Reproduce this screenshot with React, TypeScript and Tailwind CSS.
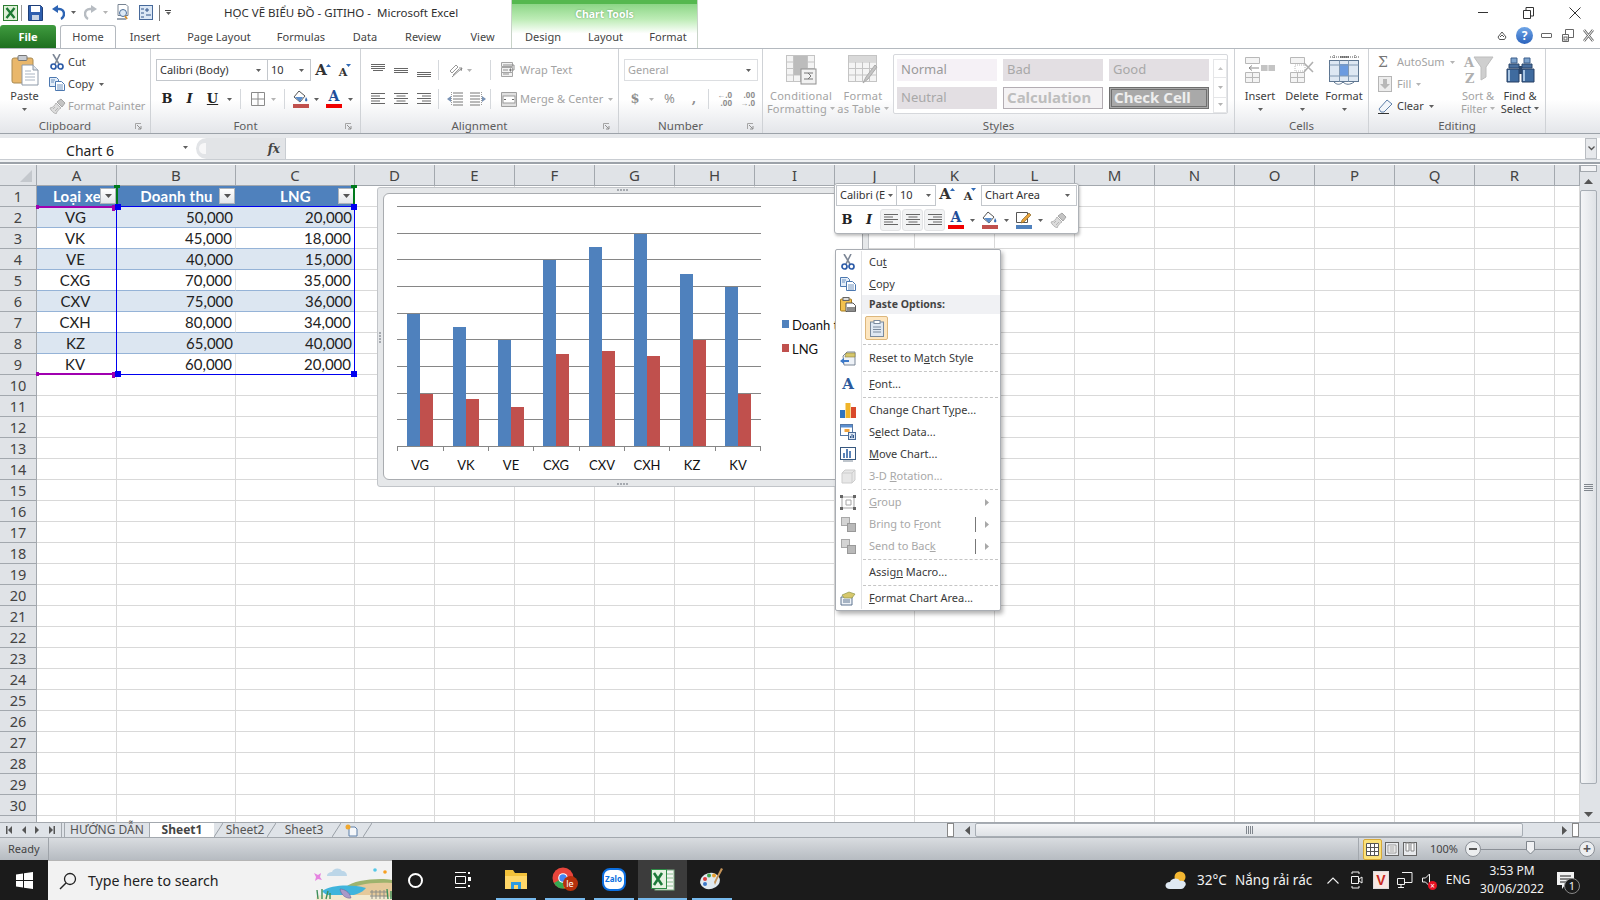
import React from "react";

const UI = "font-['Noto_Sans',sans-serif]";

const Caret = ({ off }: { off?: boolean }) => (
  <svg width="5" height="3" viewBox="0 0 5 3" className="shrink-0">
    <path d="M0 0h5L2.5 3z" fill={off ? "#b4b4b4" : "#5f5f5f"} />
  </svg>
);

const VSep = ({ className = "" }: { className?: string }) => (
  <div className={`h-[20px] w-px shrink-0 bg-[#d5d8dc] ${className}`} />
);

// ---- small drawings for the ribbon ----
const Lines = ({ kind }: { kind: string }) => {
  const sets: Record<string, number[][]> = {
    top: [[0, 1, 14], [0, 3, 14], [0, 5, 14], [2, 7, 10]],
    mid: [[0, 5, 14], [0, 7, 14], [0, 9, 14]],
    bot: [[0, 9, 14], [0, 11, 14], [0, 13, 14]],
    left: [[0, 1, 14], [0, 3.5, 9], [0, 6, 14], [0, 8.5, 9], [0, 11, 14]],
    center: [[0, 1, 14], [2.5, 3.5, 9], [0, 6, 14], [2.5, 8.5, 9], [0, 11, 14]],
    right: [[0, 1, 14], [5, 3.5, 9], [0, 6, 14], [5, 8.5, 9], [0, 11, 14]],
  };
  return (
    <svg width="14" height="14" viewBox="0 0 14 14" className="shrink-0">
      {sets[kind].map(([x, y, w], i) => (
        <rect key={i} x={x} y={y} width={w} height="1" fill="#666" />
      ))}
    </svg>
  );
};

const PasteIcon = () => (
  <svg width="28" height="31" viewBox="0 0 28 31">
    <rect x="1" y="3" width="21" height="25" rx="2" fill="#e9b76b" stroke="#a98a52" />
    <rect x="7" y="0.5" width="9" height="5" rx="1" fill="#c8ccd2" stroke="#777" />
    <path d="M11 10h11l5 5v15H11z" fill="#fff" stroke="#8d99a8" />
    <path d="M22 10v5h5" fill="#dfe5ec" stroke="#8d99a8" />
    <path d="M14 16h6M14 19h10M14 22h10M14 25h10" stroke="#a9b4c2" />
  </svg>
);

const ScissorsIcon = () => (
  <svg width="14" height="16" viewBox="0 0 14 16">
    <path d="M3 0l6 10M10 0L5 10" stroke="#7d8796" strokeWidth="1.6" />
    <circle cx="3.5" cy="12.5" r="2.5" fill="none" stroke="#2d5ca8" strokeWidth="1.7" />
    <circle cx="10.5" cy="12.5" r="2.5" fill="none" stroke="#2d5ca8" strokeWidth="1.7" />
  </svg>
);

const CopyIcon = () => (
  <svg width="16" height="14" viewBox="0 0 16 14">
    <path d="M.5.5h7l2 2v7h-9z" fill="#e3edf8" stroke="#4c78b0" />
    <path d="M6.5 4.5h6l3 3v6h-9z" fill="#fff" stroke="#4c78b0" />
    <path d="M8 8h6M8 10h6M8 12h6M2 3h4M2 5h3" stroke="#4c78b0" strokeWidth=".8" />
  </svg>
);

const BrushIcon = () => (
  <svg width="17" height="16" viewBox="0 0 17 16">
    <path d="M1 10c3 0 5-3 6-5l5 5c-2 1-4 3-5 6-2-1-5-3-6-6z" fill="#dcdcdc" stroke="#b5b5b5" />
    <path d="M8 4l4-3 4 4-3 4z" fill="#c4c4c4" stroke="#a5a5a5" />
    <path d="M4 11l2-2M6 13l3-3" stroke="#b5b5b5" />
  </svg>
);

const GrowA = ({ up }: { up: boolean }) => (
  <span className="flex w-[14px] items-start justify-center">
    <span className={`font-['DejaVu_Serif',serif] font-bold leading-none text-[#333] ${up ? "text-[15px]" : "text-[11px] mt-[4px]"}`}>A</span>
    <svg width="5" height="3" viewBox="0 0 5 3" className="-ml-px mt-px shrink-0">
      <path d={up ? "M0 3h5L2.5 0z" : "M0 0h5L2.5 3z"} fill="#2f69b5" />
    </svg>
  </span>
);

const ColorA = ({ bar }: { bar: string }) => (
  <span className="flex w-[16px] flex-col items-center">
    <span className="font-['DejaVu_Serif',serif] text-[14px] font-bold leading-[13px] text-[#1f4e9a]">A</span>
    <span className={`mt-px h-[4px] w-[16px] ${bar}`} />
  </span>
);

const FillIcon = ({ bar }: { bar: string }) => (
  <span className="flex w-[16px] flex-col items-center">
    <svg width="16" height="13" viewBox="0 0 16 13">
      <path d="M6 1l6 5-5 6-6-5z" fill="#fff" stroke="#555" />
      <path d="M2 7h8l-3 5z" fill="#5b8dcb" />
      <path d="M13 7c1 2 2 3 1 4s-2 0-2-1z" fill="#3a6fb5" />
    </svg>
    <span className={`mt-px h-[4px] w-[16px] ${bar}`} />
  </span>
);

const PenIcon = () => (
  <span className="flex w-[16px] flex-col items-center">
    <svg width="16" height="13" viewBox="0 0 16 13">
      <path d="M.5 1.5h11v10H.5z" fill="#fff" stroke="#555" />
      <path d="M6 9l7-7 2 2-7 7-3 1z" fill="#e8a33d" stroke="#8a6a2d" strokeWidth=".7" />
    </svg>
    <span className="mt-px h-[4px] w-[16px] bg-[#4f81bd]" />
  </span>
);

const BordersIcon = () => (
  <svg width="14" height="14" viewBox="0 0 14 14">
    <path d="M.5.5h13v13H.5zM7 .5v13M.5 7h13" fill="none" stroke="#8a8a8a" />
  </svg>
);

const OrientIcon = () => (
  <svg width="15" height="15" viewBox="0 0 15 15">
    <path d="M1 8l6-6 2 2-6 6zM4 12l6-6" fill="none" stroke="#9a9a9a" />
    <path d="M3 14L13 5M13 5l-1 3M13 5l-3 0" stroke="#8a8a8a" fill="none" />
  </svg>
);

const IndentIcon = ({ flip }: { flip?: boolean }) => (
  <svg width="16" height="14" viewBox="0 0 16 14" className={flip ? "-scale-x-100" : ""}>
    <path d="M6 1h10M6 4h10M6 7h10M6 10h10M6 13h10" stroke="#777" />
    <path d="M0 7l4-3v6z" fill="#7a93b5" />
    <path d="M4.500 0v14" stroke="#9a9a9a" strokeDasharray="1 1" />
  </svg>
);

const WrapIcon = () => (
  <svg width="16" height="16" viewBox="0 0 16 16">
    <path d="M.5 .5h11v4H.5zM.5 5.500h11v5H.5zM.5 10.500h11v4H.5z" fill="#f2f2f2" stroke="#a5a5a5" />
    <path d="M2 3h11v5h-3M2 8h5M2 12h6" stroke="#8f8f8f" fill="none" />
    <path d="M10 6v4l-2-2z" fill="#777" />
  </svg>
);

const MergeIcon = () => (
  <svg width="16" height="15" viewBox="0 0 16 15">
    <path d="M.5.5h15v14H.5z" fill="#e0e0e0" stroke="#a0a0a0" />
    <rect x="2" y="4" width="12" height="7" fill="#fff" stroke="#9a9a9a" />
    <path d="M3 7.500h2M11 7.500h2" stroke="#666" />
  </svg>
);

const TableIcon = ({ cond }: { cond?: boolean }) => (
  <svg width="31" height="30" viewBox="0 0 31 30">
    <rect x=".5" y=".5" width="28" height="26" fill="#f4f4f4" stroke="#c4c4c4" />
    <path d="M.5 7h28M.5 13.500h28M.5 20h28M7.500 .5v26M14.500 .5v26M21.500 .5v26" stroke="#c4c4c4" />
    {cond ? (
      <>
        <rect x="8" y="1" width="13" height="19" fill="#bcbcbc" />
        <rect x="15" y="14" width="15" height="15" fill="#f1f1f1" stroke="#8f8f8f" />
        <path d="M18 18h4l3 3-3 3h-4M22 18h5M22 24h5" stroke="#777" fill="none" />
      </>
    ) : (
      <>
        <rect x="1" y="1" width="27" height="6" fill="#d9d9d9" />
        <path d="M15 28l3-6 9-12 2 2-9 12z" fill="#c4c4c4" stroke="#aaa" />
      </>
    )}
  </svg>
);

const InsertIcon = () => (
  <svg width="31" height="26" viewBox="0 0 31 26">
    <path d="M.5.5h14v6H.5zM.5 15.500h14v10H.5zM7.500 15.500v10M.5 20.500h14" fill="#f4f4f4" stroke="#b8b8b8" />
    <rect x="16" y="8" width="14" height="6" fill="#c4c4c4" />
    <path d="M23 8v6" stroke="#f4f4f4" />
    <path d="M4 11h10M4 11l3-2.500M4 11l3 2.500" stroke="#8a8a8a" fill="none" />
  </svg>
);

const DeleteIcon = () => (
  <svg width="25" height="26" viewBox="0 0 25 26">
    <path d="M.5.5h14v6H.5zM.5 15.500h14v10H.5zM7.500 15.500v10M.5 20.500h14" fill="#f4f4f4" stroke="#b8b8b8" />
    <rect x="5" y="8" width="10" height="6" fill="#fff" stroke="#bbb" strokeDasharray="1 1" />
    <path d="M14 6l9 9M23 5l-9 10" stroke="#b0b0b0" strokeWidth="1.6" />
  </svg>
);

const FormatIcon = () => (
  <svg width="31" height="31" viewBox="0 0 31 31">
    <path d="M1 2h29M5 0v4M26 0v4" stroke="#555" strokeDasharray="1 1" />
    <path d="M11 2h9" stroke="#333" />
    <rect x=".5" y="5.500" width="29" height="21" fill="#dee8f3" stroke="#5e7691" />
    <rect x="11" y="9" width="8" height="12" fill="#6b9be0" />
    <path d="M.5 10h29M.5 21h29M10.500 5.500v21M19.500 5.500v21" stroke="#8098b2" />
    <path d="M5 27c3 3 6 3 9 0 3 3 7 3 11 0" stroke="#5e7691" fill="none" />
  </svg>
);

const SortIcon = () => (
  <svg width="31" height="30" viewBox="0 0 31 30">
    <path d="M11 2h19l-7 10v10l-5 3V12z" fill="#cfcfcf" stroke="#bdbdbd" />
    <text x="1" y="12" fontFamily="'DejaVu Serif',serif" fontWeight="700" fontSize="13" fill="#b0b0b0">A</text>
    <text x="2" y="28" fontFamily="'DejaVu Serif',serif" fontWeight="700" fontSize="13" fill="#b0b0b0">Z</text>
  </svg>
);

const BinocularsIcon = () => (
  <svg width="29" height="26" viewBox="0 0 29 26">
    <path d="M5 1h6v5H5zM18 1h6v5h-6z" fill="#7da3cd" stroke="#3d5f8c" />
    <path d="M3 7h10v4H3zM16 7h10v4H16z" fill="#486f9f" stroke="#2b466b" />
    <path d="M1 12h12v13H1zM16 12h12v13H16z" fill="#3f6b9f" stroke="#263f62" />
    <path d="M3 13v11M18 13v11" stroke="#a7c4e2" strokeWidth="2" />
    <rect x="13" y="9" width="3" height="8" fill="#2b466b" />
  </svg>
);

const FillDown = () => (
  <svg width="14" height="16" viewBox="0 0 14 16">
    <rect x=".5" y=".5" width="13" height="15" fill="#ededed" stroke="#b5b5b5" />
    <path d="M5 3h4v5h3l-5 5-5-5h3z" fill="#b8b8b8" />
  </svg>
);

const EraserIcon = () => (
  <svg width="15" height="15" viewBox="0 0 15 15">
    <path d="M1 10L9 1l5 4-8 8H3z" fill="#f3f6fa" stroke="#5d7ea8" />
    <path d="M0 14.500h11" stroke="#333" />
  </svg>
);

const Launcher = () => (
  <svg width="7" height="7" viewBox="0 0 7 7" className="absolute right-[8px] top-[4px]">
    <path d="M.5 6V.5H6" stroke="#a5a5a5" fill="none" />
    <path d="M2 2l4 4M6 3v3H3" stroke="#8f8f8f" fill="none" />
  </svg>
);

const Group = ({ w, label, launcher, children }: { w: string; label: string; launcher?: boolean; children: React.ReactNode }) => (
  <div className={`flex h-full shrink-0 flex-col border-r border-[#cfd2d6] ${w}`}>
    <div className="h-[70px]">{children}</div>
    <div className={`relative h-[14px] text-center text-[11.5px] leading-[14px] text-[#5c5c5c] ${launcher ? "pr-[20px]" : ""}`}>
      {label}
      {launcher && <Launcher />}
    </div>
  </div>
);

const BigButton = ({ w, icon, lines, caret, off }: { w: string; icon: React.ReactNode; lines: string[]; caret?: boolean; off?: boolean }) => (
  <div className={`flex shrink-0 flex-col items-center pt-[6px] ${w} ${off ? "text-[#a3a3a3]" : "text-[#3d3d3d]"}`}>
    <div className="flex h-[30px] items-center">{icon}</div>
    <div className="mt-[4px] h-[13px] whitespace-nowrap text-[11px] leading-[13px]">{lines[0]}</div>
    {lines[1] ? (
      <div className="flex h-[13px] items-center gap-[3px] whitespace-nowrap text-[11px] leading-[13px]">
        {lines[1]}
        {caret && <Caret off={off} />}
      </div>
    ) : (
      <div className="mt-[1px] flex h-[13px] items-center">{caret && <Caret off={off} />}</div>
    )}
  </div>
);

const SmallRow = ({ icon, iconW, text, off, caret }: { icon: React.ReactNode; iconW: string; text: string; off?: boolean; caret?: boolean }) => (
  <div className={`flex h-[22px] items-center whitespace-nowrap text-[11px] ${off ? "text-[#a3a3a3]" : "text-[#3d3d3d]"}`}>
    <div className={`flex shrink-0 items-center ${iconW}`}>{icon}</div>
    {text}
    {caret && (
      <span className="ml-[5px] flex">
        <Caret off={off} />
      </span>
    )}
  </div>
);

const Box = ({ w, text, gray, caretPad = "pr-[6px]" }: { w: string; text: string; gray?: boolean; caretPad?: string }) => (
  <div className={`flex h-[22px] shrink-0 items-center justify-between border border-[#c3c7cc] pl-[3px] text-[11px] ${caretPad} ${w} ${gray ? "text-[#a3a3a3]" : "text-[#333]"}`}>
    <span className="overflow-hidden whitespace-nowrap">{text}</span>
    <Caret />
  </div>
);

const Ribbon = () => (
  <div className="flex h-[86px] border-b border-t border-b-[#9ca2a9] border-t-[#b4b9bf] bg-gradient-to-b from-white from-60% to-[#e4e6ea]">
    <Group w="w-[151px]" label="Clipboard" launcher>
      <div className="flex">
        <BigButton w="w-[49px]" icon={<PasteIcon />} lines={["Paste"]} caret />
        <div className="pt-[2px]">
          <SmallRow iconW="w-[19px] pl-[1px]" icon={<ScissorsIcon />} text="Cut" />
          <SmallRow iconW="w-[19px]" icon={<CopyIcon />} text="Copy" caret />
          <SmallRow iconW="w-[19px]" icon={<BrushIcon />} text="Format Painter" off />
        </div>
      </div>
    </Group>

    <Group w="w-[210px]" label="Font" launcher>
      <div className="pl-[5px] pt-[10px]">
        <div className="flex items-center">
          <Box w="w-[112px]" text="Calibri (Body)" />
          <Box w="w-[43px] border-l-0" text="10" />
          <div className="ml-[5px] flex gap-[8px]">
            <GrowA up />
            <GrowA up={false} />
          </div>
        </div>
        <div className="mt-[7px] flex h-[22px] items-center text-[#222]">
          <span className="w-[22px] text-center font-['DejaVu_Serif',serif] text-[13px] font-bold">B</span>
          <span className="w-[23px] text-center font-['DejaVu_Serif',serif] text-[13px] font-bold italic">I</span>
          <span className="w-[23px] text-center font-['DejaVu_Serif',serif] text-[13px] font-bold underline">U</span>
          <span className="flex w-[11px] justify-center"><Caret /></span>
          <span className="flex w-[11px] justify-center"><VSep /></span>
          <span className="flex w-[23px] justify-center"><BordersIcon /></span>
          <span className="flex w-[8px] justify-center"><Caret off /></span>
          <span className="flex w-[14px] justify-center"><VSep /></span>
          <span className="flex w-[20px] justify-center"><FillIcon bar="bg-[#c0504d]" /></span>
          <span className="flex w-[10px] justify-center"><Caret /></span>
          <span className="flex w-[26px] justify-center"><ColorA bar="bg-[#f00000]" /></span>
          <span className="flex w-[6px] justify-center"><Caret /></span>
        </div>
      </div>
    </Group>

    <Group w="w-[258px]" label="Alignment" launcher>
      <div className="pl-[5px] pt-[10px]">
        <div className="flex h-[22px] items-center">
          <span className="flex w-[23px] justify-center"><Lines kind="top" /></span>
          <span className="flex w-[23px] justify-center"><Lines kind="mid" /></span>
          <span className="flex w-[23px] justify-center"><Lines kind="bot" /></span>
          <VSep className="ml-[3px]" />
          <span className="ml-[10px] flex w-[15px] justify-center"><OrientIcon /></span>
          <span className="ml-[3px]"><Caret off /></span>
          <VSep className="ml-[18px]" />
          <span className="ml-[10px]"><WrapIcon /></span>
          <span className="ml-[3px] whitespace-nowrap text-[11px] tracking-[0.1px] text-[#a3a3a3]">Wrap Text</span>
        </div>
        <div className="mt-[7px] flex h-[22px] items-center">
          <span className="flex w-[23px] justify-center"><Lines kind="left" /></span>
          <span className="flex w-[23px] justify-center"><Lines kind="center" /></span>
          <span className="flex w-[23px] justify-center"><Lines kind="right" /></span>
          <VSep className="ml-[3px]" />
          <span className="ml-[8px]"><IndentIcon /></span>
          <span className="ml-[7px]"><IndentIcon flip /></span>
          <VSep className="ml-[4px]" />
          <span className="ml-[10px]"><MergeIcon /></span>
          <span className="ml-[3px] whitespace-nowrap text-[11px] tracking-[0.1px] text-[#a3a3a3]">Merge &amp; Center</span>
          <span className="ml-[5px]"><Caret off /></span>
        </div>
      </div>
    </Group>

    <Group w="w-[144px]" label="Number" launcher>
      <div className="pt-[10px]">
        <div className="pl-[5px]">
          <Box w="w-[134px] border-[#dcdee1]" text="General" gray />
        </div>
        <div className="mt-[7px] flex h-[22px] items-center pl-[10px] text-[#8f8f8f]">
          <span className="w-[12px] text-center font-['DejaVu_Serif',serif] text-[13px] font-bold">$</span>
          <span className="ml-[8px]"><Caret off /></span>
          <span className="ml-[8px] w-[15px] text-center text-[13px]">%</span>
          <span className="ml-[12px] w-[10px] text-center font-['DejaVu_Serif',serif] text-[13px] font-bold">,</span>
          <VSep className="ml-[9px]" />
          <span className="ml-[8px] flex w-[15px] flex-col text-right text-[8px] font-bold leading-[8px]">
            <span>←.0</span>
            <span>.00</span>
          </span>
          <span className="ml-[8px] flex w-[15px] flex-col text-right text-[8px] font-bold leading-[8px]">
            <span>.00</span>
            <span>→.0</span>
          </span>
        </div>
      </div>
    </Group>

    <Group w="w-[472px]" label="Styles">
      <div className="flex">
        <BigButton w="ml-[8px] w-[60px] tracking-[0.25px]" icon={<TableIcon cond />} lines={["Conditional", "Formatting"]} caret off />
        <BigButton w="ml-[2px] w-[60px] tracking-[0.25px]" icon={<TableIcon />} lines={["Format", "as Table"]} caret off />
        <div className="mt-[5px] flex h-[60px] w-[335px] rounded-[2px] border border-[#d6d8dc] bg-white pl-[3px] pt-[4px]">
          <div className="grid h-[50px] grid-cols-[100px_100px_100px] grid-rows-[22px_22px] gap-x-[6px] gap-y-[6px] text-[13px] leading-[20px]">
            <div className="bg-[#f5f1f6] pl-[4px] text-[#9a9a9a]">Normal</div>
            <div className="bg-[#e3dfe3] pl-[4px] text-[#a8a8a8]">Bad</div>
            <div className="bg-[#e3dfe3] pl-[4px] text-[#a8a8a8]">Good</div>
            <div className="bg-[#e3dfe3] pl-[4px] text-[#a8a8a8]">Neutral</div>
            <div className="border border-[#b3adb3] bg-[#f4f2f4] pl-[3px] text-[15px] font-bold leading-[18px] text-[#bdbdbd]">Calculation</div>
            <div className="border-[3px] border-double border-[#6f6f6f] bg-[#a9a9a9] pl-[2px] text-[15px] font-bold leading-[15px] text-[#eee]">Check Cell</div>
          </div>
          <div className="ml-[4px] flex w-[14px] flex-col text-[#c4c4c4]">
            <span className="flex h-[20px] items-center justify-center border border-[#e5e6e8]"><svg width="5" height="3" viewBox="0 0 5 3"><path d="M0 3h5L2.500 0z" fill="#c4c4c4" /></svg></span>
            <span className="flex h-[20px] items-center justify-center border-x border-[#e5e6e8]"><Caret off /></span>
            <span className="flex h-[17px] items-center justify-center border border-[#e5e6e8]"><Caret off /></span>
          </div>
        </div>
      </div>
    </Group>

    <Group w="w-[134px]" label="Cells">
      <div className="flex pl-[4px]">
        <BigButton w="w-[42px]" icon={<InsertIcon />} lines={["Insert"]} caret />
        <BigButton w="w-[42px]" icon={<DeleteIcon />} lines={["Delete"]} caret />
        <BigButton w="w-[42px]" icon={<FormatIcon />} lines={["Format"]} caret />
      </div>
    </Group>

    <Group w="w-[177px]" label="Editing">
      <div className="flex">
        <div className="w-[88px] pl-[9px] pt-[2px]">
          <SmallRow iconW="w-[19px]" icon={<span className="font-['DejaVu_Serif',serif] text-[14px] leading-none text-[#777]">Σ</span>} text="AutoSum" off caret />
          <SmallRow iconW="w-[19px]" icon={<FillDown />} text="Fill" off caret />
          <SmallRow iconW="w-[19px]" icon={<EraserIcon />} text="Clear" caret />
        </div>
        <BigButton w="w-[42px]" icon={<SortIcon />} lines={["Sort &", "Filter"]} caret off />
        <BigButton w="w-[42px]" icon={<BinocularsIcon />} lines={["Find &", "Select"]} caret />
      </div>
    </Group>
    <div className="flex-1" />
  </div>
);

// ---- title bar bits ----
const XlLogo = () => (
  <svg width="15" height="16" viewBox="0 0 15 16">
    <rect x=".5" y=".5" width="14" height="15" fill="#fff" stroke="#2e7d32" />
    <rect x="1" y="1" width="13" height="14" fill="#dff0d8" />
    <path d="M3.500 3l8 10M11.500 3l-8 10" stroke="#1e7b34" strokeWidth="2.400" />
  </svg>
);

const SaveIcon = () => (
  <svg width="15" height="16" viewBox="0 0 15 16">
    <path d="M.5.5h12l2 2v13H.5z" fill="#2f5fae" stroke="#1f3f78" />
    <rect x="3" y="1" width="9" height="6" fill="#fff" />
    <rect x="4" y="10" width="7" height="5" fill="#c8d4e4" />
  </svg>
);

const UndoArrow = ({ off }: { off?: boolean }) => (
  <svg width="13" height="15" viewBox="0 0 13 15" className={off ? "-scale-x-100" : ""}>
    <path d="M4 4h3c3 0 5 2 5 5 0 2-1 4-3 5" fill="none" stroke={off ? "#b7bcc2" : "#2d64b4"} strokeWidth="2.400" />
    <path d="M6 0v8L0 4z" fill={off ? "#b7bcc2" : "#2d64b4"} />
  </svg>
);

const PreviewIcon = () => (
  <svg width="15" height="17" viewBox="0 0 15 17">
    <path d="M2 .5h8l2 2v9H2z" fill="#fff" stroke="#788493" />
    <circle cx="7" cy="9" r="3.500" fill="#dce9f6" stroke="#4d6f99" />
    <path d="M9 12l2 3" stroke="#d8912e" strokeWidth="2" />
    <path d="M1 15h9" stroke="#9ba5b1" strokeWidth="2" />
  </svg>
);

const FormIcon = () => (
  <svg width="14" height="15" viewBox="0 0 14 15">
    <rect x=".5" y=".5" width="13" height="14" fill="#dbe7f5" stroke="#47699a" />
    <path d="M2 4h3M2 8h3M2 12h3M8 3v4M6 5h4M7 10h5" stroke="#31548a" />
  </svg>
);

const TitleRow = () => (
  <div className="flex h-[25px] items-center">
    <span className="ml-[3px]"><XlLogo /></span>
    <span className="ml-[3px] h-[16px] w-px bg-[#9a9a9a]" />
    <span className="ml-[6px]"><SaveIcon /></span>
    <span className="ml-[9px]"><UndoArrow /></span>
    <span className="ml-[6px]"><Caret /></span>
    <span className="ml-[8px]"><UndoArrow off /></span>
    <span className="ml-[6px]"><Caret off /></span>
    <span className="ml-[8px]"><PreviewIcon /></span>
    <span className="ml-[8px]"><FormIcon /></span>
    <span className="ml-[6px] h-[16px] w-px bg-[#777]" />
    <span className="ml-[5px] flex flex-col items-center gap-px">
      <span className="h-px w-[6px] bg-[#444]" />
      <Caret />
    </span>
    <span className="ml-[53px] whitespace-nowrap text-[11.5px] text-[#2f2f2f]">HỌC VẼ BIỂU ĐỒ - GITIHO -&nbsp; Microsoft Excel</span>
  </div>
);

const TabText = ({ w, children }: { w: string; children: React.ReactNode }) => (
  <div className={`flex h-[23px] shrink-0 items-center justify-center whitespace-nowrap pt-px text-[11px] text-[#444] ${w}`}>{children}</div>
);

const TabsRow = () => (
  <div className="flex h-[23px] items-end">
    <div className="flex h-[23px] w-[56px] items-center justify-center rounded-t-[3px] bg-gradient-to-b from-[#3f9b3f] to-[#1d6f1f] pt-px text-[11px] font-bold text-white">File</div>
    <div className="ml-[4px] flex h-[23px] w-[56px] items-center justify-center rounded-t-[3px] border border-b-0 border-[#b4b9bf] bg-white pt-px text-[11px] text-[#444]">Home</div>
    <TabText w="w-[58px]">Insert</TabText>
    <TabText w="w-[90px]">Page Layout</TabText>
    <TabText w="w-[74px]">Formulas</TabText>
    <TabText w="w-[54px]">Data</TabText>
    <TabText w="w-[62px]">Review</TabText>
    <TabText w="w-[57px]">View</TabText>
  </div>
);

const WindowButtons = () => (
  <div className="flex flex-1 flex-col">
    <div className="flex h-[25px] items-center justify-end pr-[19px]">
      <span className="h-px w-[10px] bg-[#333]" />
      <span className="ml-[35px]">
        <svg width="11" height="12" viewBox="0 0 11 12"><path d="M.5 3.500h7v8h-7zM3 3.500V.5h7.500V9H8" fill="none" stroke="#333" /></svg>
      </span>
      <span className="ml-[35px]">
        <svg width="12" height="12" viewBox="0 0 12 12"><path d="M.5.5l11 11M11.500.5l-11 11" stroke="#333" /></svg>
      </span>
    </div>
    <div className="flex h-[23px] items-center justify-end pb-[2px] pr-[6px]">
      <svg width="10" height="10" viewBox="0 0 10 10"><path d="M5 1L1 6l1.500 2.500h5L9 6z" fill="none" stroke="#555" /><path d="M3 6l2-2 2 2" fill="none" stroke="#555" /></svg>
      <span className="ml-[9px] flex h-[17px] w-[17px] items-center justify-center rounded-full bg-gradient-to-b from-[#6fa5e6] to-[#2b63bd] text-[12px] font-bold leading-none text-white">?</span>
      <span className="ml-[8px] h-[5px] w-[11px] rounded-[1px] border border-[#666]" />
      <span className="ml-[10px]">
        <svg width="12" height="13" viewBox="0 0 12 13"><path d="M.5 5.500h6v7h-6zM3.500 5.500V.5h8v8h-5" fill="#fff" stroke="#666" /><rect x="2" y="8" width="3" height="3" fill="#fff" stroke="#666" /></svg>
      </span>
      <span className="ml-[9px]">
        <svg width="11" height="13" viewBox="0 0 11 13"><path d="M1 1l9 11M10 1L1 12" stroke="#666" strokeWidth="2.600" /><path d="M1 1l9 11M10 1L1 12" stroke="#fff" strokeWidth="1" /></svg>
      </span>
    </div>
  </div>
);

const FormulaBar = () => (
  <div className="border-b-[2px] border-t-[4px] border-b-[#9ca2a9] border-t-[#e6e8eb] bg-[#eff1f3] pb-[2px]">
    <div className="flex h-[22px] items-center border-b border-[#c9cdd2] bg-white">
      <div className="relative flex w-[196px] shrink-0 items-center justify-center pr-[16px] pt-[3px] text-[14px] text-[#222]">
        Chart 6
        <span className="absolute right-[8px] top-[9px]"><Caret /></span>
      </div>
      <div className="flex h-[21px] w-[89px] shrink-0 items-center justify-between rounded-l-full bg-[#e2e4e7] pl-[3px] pr-[5px]">
        <span className="h-[11px] w-[7px] rounded-l-full bg-[#f7f7f8]" />
        <span className="font-['DejaVu_Serif',serif] text-[12px] font-bold italic text-[#444]">fx</span>
      </div>
      <div className="h-full flex-1 border-l border-[#c9cdd2]" />
      <div className="mr-[3px] flex h-[21px] w-[12px] items-center justify-center border border-[#b9bdc2] bg-[#e7e9ec]">
        <svg width="7" height="5" viewBox="0 0 7 5"><path d="M.5.5l3 3 3-3" fill="none" stroke="#555" strokeWidth="1.300" /></svg>
      </div>
    </div>
  </div>
);

// ---- sheet ----
const COLS = ["A", "B", "C", "D", "E", "F", "G", "H", "I", "J", "K", "L", "M", "N", "O", "P", "Q", "R", ""];
const DATA = [
  ["VG", "50,000", "20,000"],
  ["VK", "45,000", "18,000"],
  ["VE", "40,000", "15,000"],
  ["CXG", "70,000", "35,000"],
  ["CXV", "75,000", "36,000"],
  ["CXH", "80,000", "34,000"],
  ["KZ", "65,000", "40,000"],
  ["KV", "60,000", "20,000"],
];
const GRID = "grid grid-cols-[37px_80px_119px_119px_repeat(15,80px)_25px]";
const ROW_NUMS = Array.from({ length: 31 }, (_, i) => i + 1);

const FilterButton = () => (
  <span className="absolute right-px top-[2px] flex h-[16px] w-[16px] items-center justify-center border border-[#aeb4bb] bg-gradient-to-b from-white to-[#e3e6ea]">
    <svg width="7" height="4" viewBox="0 0 7 4"><path d="M0 0h7L3.500 4z" fill="#555" /></svg>
  </span>
);

const HeaderCell = ({ text }: { text: string }) => (
  <div className="relative flex h-[21px] items-center justify-center border-b border-[#4f81bd] bg-[#4f81bd] font-['Lato',sans-serif] text-[15px] font-bold tracking-[0.2px] text-white">
    <span className="whitespace-nowrap">{text}</span>
    <FilterButton />
  </div>
);

const Sheet = () => (
  <div className="flex-1 overflow-hidden font-['Lato',sans-serif] text-[#222]">
    <div className={`${GRID} h-[21px] bg-[#e0e3e7] text-[15px] text-[#444] ${UI}`}>
      <div className="flex items-end justify-end border-b border-r border-[#a3a8ae] pb-[3px] pr-[4px]">
        <svg width="12" height="12" viewBox="0 0 12 12"><path d="M12 0v12H0z" fill="#c4c8cd" /></svg>
      </div>
      {COLS.map((c, i) => (
        <div key={i} className="flex items-center justify-center border-b border-r border-[#a3a8ae] leading-none">{c}</div>
      ))}
    </div>
    {ROW_NUMS.map((n) => (
      <div key={n} className={`${GRID} h-[21px]`}>
        <div className={`flex items-center justify-center border-b border-r border-[#a3a8ae] bg-[#e0e3e7] text-[14.5px] leading-none text-[#444] ${UI}`}>{n}</div>
        {n === 1 && (
          <>
            <HeaderCell text="Loại xe" />
            <HeaderCell text="Doanh thu" />
            <HeaderCell text="LNG" />
          </>
        )}
        {n >= 2 && n <= 9 &&
          DATA[n - 2].map((v, i) => (
            <div
              key={i}
              className={`flex items-center border-b border-[#95b3d7] pr-[3px] text-[15px] leading-none ${i === 0 ? "justify-center" : "justify-end"} ${n % 2 === 0 ? "bg-[#dce6f1]" : "border-r border-r-[#e2e2e2] bg-white"}`}
            >
              {v}
            </div>
          ))}
        {COLS.map((_, i) =>
          n >= 10 || i >= 3 ? <div key={i} className="border-b border-r border-[#d9d9d9] bg-white" /> : null
        )}
      </div>
    ))}
  </div>
);

const VScroll = () => (
  <div className="flex w-[20px] shrink-0 flex-col bg-[#e0e3e7] pr-[3px]">
    <div className="h-[7px] border border-[#a3a8ae] bg-[#f2f3f5]" />
    <div className="flex h-[18px] items-center justify-center">
      <svg width="9" height="5" viewBox="0 0 9 5"><path d="M0 5h9L4.500 0z" fill="#555" /></svg>
    </div>
    <div className="flex h-[594px] items-center justify-center rounded-[2px] border border-[#a7adb4] bg-gradient-to-r from-[#f4f5f7] to-[#dfe2e6]">
      <span className="flex flex-col gap-px">
        <span className="h-px w-[9px] bg-[#80868d]" />
        <span className="h-px w-[9px] bg-[#80868d]" />
        <span className="h-px w-[9px] bg-[#80868d]" />
        <span className="h-px w-[9px] bg-[#80868d]" />
      </span>
    </div>
    <div className="flex flex-1 items-end justify-center pb-[5px]">
      <svg width="9" height="5" viewBox="0 0 9 5"><path d="M0 0h9L4.500 5z" fill="#555" /></svg>
    </div>
  </div>
);

// overlays on the cells: range highlight of the selected chart
const Handle = ({ className }: { className: string }) => <span className={`absolute h-[6px] w-[6px] ${className}`} />;

const RangeMarks = () => (
  <>
    <div className="absolute left-[37px] top-[206px] h-[2px] w-[80px] bg-[#a000b0]" />
    <div className="absolute left-[37px] top-[373px] h-[2px] w-[80px] bg-[#a000b0]" />
    <div className="absolute left-[116px] top-[186px] h-[21px] w-[2px] bg-[#007a1c]" />
    <div className="absolute left-[353px] top-[186px] h-[21px] w-[2px] bg-[#007a1c]" />
    <div className="absolute left-[116px] top-[206px] h-[169px] w-[239px] border-[1.5px] border-[#0000f0]" />
    <Handle className="left-[114px] top-[185px] !h-[3px] bg-[#007a1c]" />
    <Handle className="left-[351px] top-[185px] !h-[3px] bg-[#007a1c]" />
    <Handle className="left-[36px] top-[205px] !h-[4px] !w-[3px] bg-[#a000b0]" />
    <Handle className="left-[36px] top-[372px] !h-[4px] !w-[3px] bg-[#a000b0]" />
    <Handle className="left-[112px] top-[205px] !w-[3px] bg-[#a000b0]" />
    <Handle className="left-[112px] top-[372px] !w-[3px] bg-[#a000b0]" />
    <Handle className="left-[115px] top-[204px] bg-[#0000f0]" />
    <Handle className="left-[351px] top-[204px] bg-[#0000f0]" />
    <Handle className="left-[115px] top-[371px] bg-[#0000f0]" />
    <Handle className="left-[351px] top-[371px] bg-[#0000f0]" />
  </>
);

const Y_LINES = [206, 233, 259, 286, 313, 339, 366, 393, 419, 446];
const TICKS = [397, 443, 488, 533, 579, 624, 669, 715, 760];
const BARS = [
  { name: "VG", x: 407, a: 50000, b: 20000, c: 420 },
  { name: "VK", x: 453, a: 45000, b: 18000, c: 466 },
  { name: "VE", x: 498, a: 40000, b: 15000, c: 511 },
  { name: "CXG", x: 543, a: 70000, b: 35000, c: 556 },
  { name: "CXV", x: 589, a: 75000, b: 36000, c: 602 },
  { name: "CXH", x: 634, a: 80000, b: 34000, c: 647 },
  { name: "KZ", x: 680, a: 65000, b: 40000, c: 692 },
  { name: "KV", x: 725, a: 60000, b: 20000, c: 738 },
];
const barTop = (v: number) => Math.round(447 - (v / 90000) * 240);

const GripH = ({ className }: { className: string }) => (
  <span className={`absolute flex gap-px ${className}`}>
    {[0, 1, 2, 3].map((i) => (
      <span key={i} className="h-[2px] w-[2px] bg-[#a6aab0]" />
    ))}
  </span>
);

const Chart = () => (
  <div className="absolute left-[377px] top-[187px] h-[300px] w-[492px] rounded-[3px] border border-[#c2c5c9] bg-[#e6e8ea] p-[5px]">
    <GripH className="left-[239px] top-[1px]" />
    <GripH className="bottom-[1px] left-[239px]" />
    <span className="absolute left-[1px] top-[144px] flex flex-col gap-px">
      {[0, 1, 2, 3].map((i) => (
        <span key={i} className="h-[2px] w-[2px] bg-[#a6aab0]" />
      ))}
    </span>
    <div className="h-[287px] w-[480px] rounded-[6px] border border-[#a9acb0] bg-white">
      <svg width="478" height="285" viewBox="384 194 478 285" className="block">
        {Y_LINES.map((y) => (
          <line key={y} x1="397" x2="761" y1={y + 0.5} y2={y + 0.5} stroke="#868686" />
        ))}
        {TICKS.map((x) => (
          <line key={x} x1={x + 0.5} x2={x + 0.5} y1="446" y2="451" stroke="#868686" />
        ))}
        {BARS.map((b) => (
          <g key={b.name}>
            <rect x={b.x} y={barTop(b.a)} width="13" height={446 - barTop(b.a)} fill="#4f81bd" />
            <rect x={b.x + 13} y={barTop(b.b)} width="13" height={446 - barTop(b.b)} fill="#c0504d" />
            <text x={b.c} y="470" textAnchor="middle" fontFamily="Lato, sans-serif" fontSize="13" fill="#111">{b.name}</text>
          </g>
        ))}
        <rect x="782" y="320" width="7" height="8" fill="#4f81bd" />
        <text x="792" y="330" fontFamily="Lato, sans-serif" fontSize="13" fill="#111">Doanh thu</text>
        <rect x="782" y="344" width="7" height="8" fill="#c0504d" />
        <text x="792" y="354" fontFamily="Lato, sans-serif" fontSize="13" fill="#111">LNG</text>
      </svg>
    </div>
  </div>
);

const MiniToolbar = () => (
  <div className={`absolute left-[834px] top-[183px] h-[51px] w-[245px] rounded-[3px] border border-[#aeb2b7] bg-white shadow-[1px_2px_3px_rgba(0,0,0,0.25)] ${UI}`}>
    <div className="flex pl-[1px] pt-px text-[#333]">
      <Box w="w-[61px] !h-[21px]" text="Calibri (E" caretPad="pr-[3px]" />
      <Box w="w-[39px] !h-[21px] border-l-0" text="10" caretPad="pr-[4px]" />
      <div className="ml-[4px] flex w-[41px] gap-[9px] pt-[2px]">
        <GrowA up />
        <GrowA up={false} />
      </div>
      <Box w="w-[96px] !h-[21px]" text="Chart Area" />
    </div>
    <div className="flex h-[28px] items-center pl-[1px] text-[#222]">
      <span className="w-[22px] text-center font-['DejaVu_Serif',serif] text-[13px] font-bold">B</span>
      <span className="w-[22px] text-center font-['DejaVu_Serif',serif] text-[13px] font-bold italic">I</span>
      <span className="flex h-[22px] w-[21px] items-center justify-center rounded-[3px] border border-[#e2e3e5] bg-[#f2f3f4]"><Lines kind="left" /></span>
      <span className="ml-px flex h-[22px] w-[21px] items-center justify-center rounded-[3px] border border-[#e2e3e5] bg-[#f2f3f4]"><Lines kind="center" /></span>
      <span className="ml-px flex h-[22px] w-[21px] items-center justify-center rounded-[3px] border border-[#e2e3e5] bg-[#f2f3f4]"><Lines kind="right" /></span>
      <span className="ml-[3px]"><ColorA bar="bg-[#f00000]" /></span>
      <span className="ml-[6px]"><Caret /></span>
      <span className="ml-[7px]"><FillIcon bar="bg-[#c0504d]" /></span>
      <span className="ml-[6px]"><Caret /></span>
      <span className="ml-[7px]"><PenIcon /></span>
      <span className="ml-[6px]"><Caret /></span>
      <span className="ml-[7px]"><BrushIcon /></span>
    </div>
  </div>
);

// ---- context menu icons ----
const MenuIcons: Record<string, React.ReactNode> = {
  cut: <ScissorsIcon />,
  copy: <CopyIcon />,
  paste: (
    <svg width="16" height="15" viewBox="0 0 16 15">
      <rect x=".5" y="2" width="11" height="12" rx="1" fill="#f2c14e" stroke="#a47b1f" />
      <rect x="3" y=".5" width="6" height="3" fill="#ddd" stroke="#666" />
      <path d="M6 6h7l2.500 2.500V14.500H6z" fill="#fff" stroke="#555" />
      <rect x="7" y="10" width="8" height="4.500" fill="#8c8c8c" />
    </svg>
  ),
  reset: (
    <svg width="16" height="15" viewBox="0 0 16 15">
      <path d="M3 5l4-4h8v13H4z" fill="#eef2f7" stroke="#7a8696" />
      <path d="M6 2h9v4H5z" fill="#d6c76b" stroke="#8b7f3e" strokeWidth=".6" />
      <path d="M0 10l4-3v2h5v2H4v2z" fill="#3b78c8" />
    </svg>
  ),
  font: <span className="font-['DejaVu_Serif',serif] text-[15px] font-bold leading-none text-[#2c5a9c]">A</span>,
  type: (
    <svg width="16" height="16" viewBox="0 0 16 16">
      <rect x="0" y="8" width="5" height="8" fill="#2f74c0" />
      <rect x="5.500" y="1" width="5" height="15" fill="#f0b429" />
      <rect x="11" y="5" width="5" height="11" fill="#d9492a" />
    </svg>
  ),
  select: (
    <svg width="16" height="16" viewBox="0 0 16 16">
      <rect x=".5" y=".5" width="12" height="11" fill="#fff" stroke="#5577a5" />
      <rect x="1" y="1" width="11" height="2.500" fill="#5b8fd0" />
      <path d="M4.500 5h5v3h-5z" fill="#f1a33d" />
      <rect x="8.500" y="8.500" width="7" height="7" fill="#dce7f4" stroke="#4a6a96" />
      <path d="M10.500 14v-2M12 14v-4M13.500 14v-3" stroke="#33578a" />
    </svg>
  ),
  move: (
    <svg width="16" height="15" viewBox="0 0 16 15">
      <rect x=".5" y=".5" width="15" height="12" fill="#fff" stroke="#37587f" />
      <rect x="3" y="6" width="2" height="5" fill="#5a83b8" />
      <rect x="6" y="2" width="2" height="9" fill="#5a83b8" />
      <rect x="9" y="4" width="2" height="7" fill="#5a83b8" />
      <path d="M3 14h10" stroke="#7f8b99" />
    </svg>
  ),
  rotate: (
    <svg width="15" height="15" viewBox="0 0 15 15">
      <path d="M1 4l3-3h10v10l-3 3H1z" fill="#e7e7e7" stroke="#cdcdcd" />
      <path d="M1 4h10v10M11 4l3-3" fill="none" stroke="#cdcdcd" />
    </svg>
  ),
  group: (
    <svg width="16" height="15" viewBox="0 0 16 15">
      <path d="M2 2h12v11H2z" fill="none" stroke="#a5a5a5" />
      <path d="M6 5h5v5H6z" fill="none" stroke="#a5a5a5" />
      <path d="M0 0h3v3H0zM13 0h3v3h-3zM0 12h3v3H0zM13 12h3v3h-3z" fill="#666" />
    </svg>
  ),
  front: (
    <svg width="15" height="15" viewBox="0 0 15 15">
      <rect x=".5" y=".5" width="8" height="8" fill="#d4d4d4" stroke="#a8a8a8" />
      <rect x="6.500" y="6.500" width="8" height="8" fill="#b9b9b9" stroke="#999" />
    </svg>
  ),
  format: (
    <svg width="16" height="15" viewBox="0 0 16 15">
      <path d="M1 6h11v8H1z" fill="#eef2f7" stroke="#5f7590" />
      <path d="M3 9h7M3 11h7" stroke="#5f7590" />
      <path d="M2 4l7-3 6 2-3 4H4z" fill="#d6c76b" stroke="#7f8b3e" strokeWidth=".6" />
    </svg>
  ),
};

const Dash = ({ tall }: { tall?: boolean }) => (
  <div className={`ml-[27px] mr-[2px] flex items-center ${tall ? "h-[5px]" : "h-[4px]"}`}>
    <div className="w-full border-t border-dashed border-[#c5c5c5]" />
  </div>
);

const Item = ({ icon, children, off, sub, bar }: { icon?: string; children: React.ReactNode; off?: boolean; sub?: boolean; bar?: boolean }) => (
  <div className={`flex h-[22px] items-center whitespace-nowrap ${off ? "text-[#a8a8a8]" : "text-[#3a3a3a]"}`}>
    <div className="flex h-full w-[24px] shrink-0 items-center justify-center">{icon && MenuIcons[icon]}</div>
    <div className="ml-[9px] flex-1">{children}</div>
    {bar && <span className="mr-[9px] h-[15px] w-px bg-[#777]" />}
    {sub && (
      <svg width="4" height="7" viewBox="0 0 4 7" className="mr-[11px]"><path d="M0 0l4 3.500L0 7z" fill="#a8a8a8" /></svg>
    )}
  </div>
);

const ContextMenu = () => (
  <div className={`absolute left-[835px] top-[249px] h-[362px] w-[166px] rounded-[2px] border border-[#a9adb3] bg-white py-px text-[11px] shadow-[2px_3px_4px_rgba(0,0,0,0.3)] ${UI}`}>
    <div className="absolute bottom-px left-[25px] top-px w-px bg-[#e2e3e5]" />
    <Item icon="cut">Cu<u>t</u></Item>
    <Item icon="copy"><u>C</u>opy</Item>
    <div className="flex h-[19px] items-center">
      <div className="flex h-full w-[24px] shrink-0 items-center justify-center">{MenuIcons.paste}</div>
      <div className="ml-[2px] flex h-full flex-1 items-center bg-[#f0f1f4] pl-[7px] pr-px text-[10.5px] font-bold text-[#444]">Paste Options:</div>
    </div>
    <div className="flex h-[28px] items-center pl-[29px]">
      <span className="flex h-[24px] w-[23px] items-center justify-center rounded-[2px] border border-[#ddb77c] bg-[#fde6c0]">
        <svg width="14" height="17" viewBox="0 0 14 17">
          <rect x=".5" y="2" width="13" height="14.500" fill="#dfe8f3" stroke="#7a8a9e" />
          <rect x="4" y=".5" width="6" height="3" fill="#fff" stroke="#7a8a9e" />
          <path d="M3 7h8M3 9.500h8M3 12h8" stroke="#7a8a9e" />
        </svg>
      </span>
    </div>
    <Dash tall />
    <Item icon="reset">Reset to M<u>a</u>tch Style</Item>
    <Dash />
    <Item icon="font"><u>F</u>ont...</Item>
    <Dash />
    <Item icon="type">Change Chart T<u>y</u>pe...</Item>
    <Item icon="select">S<u>e</u>lect Data...</Item>
    <Item icon="move"><u>M</u>ove Chart...</Item>
    <Item icon="rotate" off>3-D <u>R</u>otation...</Item>
    <Dash />
    <Item icon="group" off sub><u>G</u>roup</Item>
    <Item icon="front" off sub bar>Bring to F<u>r</u>ont</Item>
    <Item icon="front" off sub bar>Send to Bac<u>k</u></Item>
    <Dash />
    <Item>Assig<u>n</u> Macro...</Item>
    <Dash />
    <Item icon="format"><u>F</u>ormat Chart Area...</Item>
  </div>
);

// ---- bottom ----
const NavArrow = ({ dir, stop }: { dir: "l" | "r"; stop?: boolean }) => (
  <span className="flex w-[14px] justify-center">
    <svg width="7" height="8" viewBox="0 0 7 8" className={dir === "r" ? "-scale-x-100" : ""}>
      {stop && <rect x="0" y="0" width="1.500" height="8" fill="#555" />}
      <path d="M6 0v8L2 4z" fill="#555" />
    </svg>
  </span>
);

const Slant = () => (
  <svg width="9" height="14" viewBox="0 0 9 14" className="shrink-0"><path d="M0 14L9 0" stroke="#9aa0a7" /></svg>
);

const SheetTabs = () => (
  <div className="flex h-[16px] items-stretch border-b border-t border-b-[#a3a8ae] border-t-[#a3a8ae] bg-[#dfe3e8] text-[12px] leading-[14px] text-[#555]">
    <div className="flex w-[62px] shrink-0 items-center border-r border-[#a3a8ae] pl-[2px]">
      <NavArrow dir="l" stop />
      <NavArrow dir="l" />
      <NavArrow dir="r" />
      <NavArrow dir="r" stop />
    </div>
    <div className="ml-[2px] flex w-[86px] shrink-0 items-center justify-center border-x border-[#a3a8ae]">HƯỚNG DẪN</div>
    <div className="flex w-[64px] shrink-0 items-center justify-center bg-white font-bold text-[#444]">Sheet1</div>
    <Slant />
    <div className="flex w-[44px] shrink-0 items-center justify-center">Sheet2</div>
    <Slant />
    <div className="flex w-[56px] shrink-0 items-center justify-center">Sheet3</div>
    <Slant />
    <div className="flex w-[22px] shrink-0 items-center justify-center">
      <svg width="14" height="13" viewBox="0 0 14 13"><path d="M4 3h6l2 2v7H4z" fill="#f5f7fa" stroke="#5d7ea8" /><circle cx="3" cy="3" r="2.500" fill="#f0a830" /></svg>
    </div>
    <Slant />
    <div className="flex-1" />
    <div className="mr-[5px] flex items-center">
      <span className="h-[14px] w-[7px] border border-[#888] bg-white" />
    </div>
    <div className="flex w-[16px] items-center justify-center">
      <svg width="5" height="9" viewBox="0 0 5 9"><path d="M5 0v9L0 4.500z" fill="#555" /></svg>
    </div>
    <div className="flex w-[548px] items-center justify-center rounded-[2px] border border-[#a7adb4] bg-gradient-to-b from-[#f4f5f7] to-[#dfe2e6]">
      <span className="flex gap-px">
        {[0, 1, 2, 3].map((i) => <span key={i} className="h-[8px] w-px bg-[#80868d]" />)}
      </span>
    </div>
    <div className="w-[37px]" />
    <div className="flex w-[8px] items-center justify-center">
      <svg width="5" height="9" viewBox="0 0 5 9"><path d="M0 0v9l5-4.500z" fill="#555" /></svg>
    </div>
    <div className="ml-[4px] flex items-center">
      <span className="h-[14px] w-[7px] border border-[#888] bg-white" />
    </div>
    <div className="w-[21px]" />
  </div>
);

const StatusBar = () => (
  <div className="flex h-[22px] items-center bg-gradient-to-b from-[#d9dce0] to-[#b6bbc1] text-[11px] text-[#444]">
    <div className="flex h-full w-[49px] items-center border-r border-[#9ea3a9] pl-[8px]">Ready</div>
    <div className="flex-1" />
    <div className="flex h-full items-center border-l border-[#a3a8ae] pl-[4px]">
      <span className="flex h-[21px] w-[19px] items-center justify-center rounded-[2px] border border-[#d6a93a] bg-[#fbe27a]">
        <svg width="13" height="13" viewBox="0 0 13 13"><path d="M.5.5h12v12H.5zM4.500.5v12M8.500.5v12M.5 4.500h12M.5 8.500h12" fill="#fff" stroke="#555" /></svg>
      </span>
      <span className="ml-[3px]">
        <svg width="14" height="14" viewBox="0 0 14 14"><rect x=".5" y=".5" width="13" height="13" fill="#e8eaed" stroke="#666" /><path d="M3 3h8v8H3z" fill="#fff" stroke="#999" /><path d="M4.500 5h5M4.500 7h5M4.500 9h5" stroke="#999" /></svg>
      </span>
      <span className="ml-[4px]">
        <svg width="14" height="14" viewBox="0 0 14 14"><rect x=".5" y=".5" width="13" height="13" fill="#e8eaed" stroke="#666" /><path d="M3 1h3v8H3zM8 1h3v8H8z" fill="#fff" stroke="#888" /></svg>
      </span>
      <span className="ml-[12px] w-[30px] text-center text-[#444]">100%</span>
      <span className="ml-[6px] flex h-[16px] w-[16px] items-center justify-center rounded-full border border-[#8b9097] bg-[#eceef0]">
        <span className="h-[2px] w-[8px] bg-[#555]" />
      </span>
      <div className="relative flex h-full w-[98px] items-center">
        <div className="h-px w-full bg-[#8b9097]" />
        <svg width="9" height="14" viewBox="0 0 9 14" className="absolute left-[45px] top-[3px]"><path d="M.5.5h8V9l-4 4-4-4z" fill="#f0f1f3" stroke="#7f858c" /></svg>
      </div>
      <span className="mr-[5px] flex h-[16px] w-[16px] items-center justify-center rounded-full border border-[#8b9097] bg-[#eceef0] text-[14px] font-bold leading-none text-[#555]">+</span>
    </div>
  </div>
);

const Tile = ({ children, active }: { children: React.ReactNode; active?: boolean }) => (
  <div className={`flex h-[40px] w-[49px] shrink-0 flex-col items-center ${active ? "bg-[#3c3c3c]" : ""}`}>
    <div className="flex flex-1 items-center justify-center">{children}</div>
    <div className={`h-[2px] bg-[#76b9ed] ${active ? "w-full" : "w-[40px]"}`} />
  </div>
);

const Scene = () => (
  <svg width="82" height="40" viewBox="10 2 82 40" className="absolute right-0 top-0">
    <path d="M27 17c0-3 3-4 5-4 1-4 8-5 10-1 3 0 5 2 5 5z" fill="#bcd6e8" />
    <path d="M14 14l4 2 3-2-1 4 2 3-4-1-3 2 1-4z" fill="#e583e0" />
    <circle cx="75" cy="11" r="1.800" fill="#55c8e8" />
    <circle cx="85" cy="13" r="1.800" fill="#f8a020" />
    <path d="M38 42c0-10 10-18 22-20 10-2 24-3 32-1v21z" fill="#9eb36d" />
    <path d="M48 32c6-6 20-9 44-8v18H48z" fill="#e5c99a" />
    <path d="M22 32c10-6 28-7 44-3-4 5-12 8-24 9-8 1-16-1-20-6z" fill="#3fb4dc" />
    <path d="M16 42v-4l4-2h50l22 2v4z" fill="#f3e9cf" />
    <path d="M40 30c4 0 10 3 11 9-5 1-10-3-11-9z" fill="#a99ac8" stroke="#6b5d8b" strokeWidth=".5" />
    <path d="M70 33h18M70 37h18M72 31v9M76 31v9M80 31v9M84 31v9" stroke="#8d8d85" />
    <path d="M18 40l-1-9M22 40v-10M26 40l2-8M30 40l0-6" stroke="#3f8f5a" strokeWidth="1.400" />
    <path d="M88 40l-1-10M91 40v-8" stroke="#3f8f5a" strokeWidth="1.400" />
  </svg>
);

const Taskbar = () => (
  <div className="flex h-[40px] bg-[#1b1b1b] text-white">
    <div className="flex h-full w-[48px] items-center justify-center">
      <svg width="17" height="17" viewBox="0 0 17 17"><path d="M0 2.400l7-1v6.600H0zM8 1.200L17 0v8H8zM0 9h7v6.600l-7-1zM8 9h9v8l-9-1.200z" fill="#fff" /></svg>
    </div>
    <div className="relative flex h-full w-[344px] items-center border-t border-[#b5b5b5] bg-[#f2f2f2] text-[#222]">
      <svg width="18" height="18" viewBox="0 0 18 18" className="ml-[11px]"><circle cx="11" cy="7" r="5.500" fill="none" stroke="#222" strokeWidth="1.300" /><path d="M7 11l-6 6" stroke="#222" strokeWidth="1.500" /></svg>
      <span className="ml-[11px] whitespace-nowrap text-[14.2px]">Type here to search</span>
      <Scene />
    </div>
    <div className="flex w-[47px] items-center justify-center">
      <span className="h-[15px] w-[15px] rounded-full border-[2.5px] border-white" />
    </div>
    <div className="flex w-[48px] items-center justify-center">
      <svg width="16" height="16" viewBox="0 0 16 16"><path d="M0 .5h11M0 15.500h11M.5 4.500h10v7H.5z" fill="none" stroke="#fff" /><path d="M13 0h2v2h-2M13 5h3v4h-3M13 13h2v2h-2" fill="#fff" /></svg>
    </div>
    <div className="ml-[4px] flex">
      <Tile>
        <svg width="22" height="20" viewBox="0 0 22 20"><path d="M0 1h8l2 3h12v15H0z" fill="#f3c13a" /><path d="M0 7h22v13H0z" fill="#ffd768" /><path d="M6 20v-7h10v7h-3v-4H9v4z" fill="#2f9be0" /></svg>
      </Tile>
      <Tile>
        <span className="relative h-[24px] w-[26px]">
          <svg width="22" height="22" viewBox="0 0 22 22">
            <circle cx="11" cy="11" r="10.500" fill="#e8453c" />
            <path d="M11 11L2 16a10.500 10.500 0 0 0 10 5.500z" fill="#34a853" />
            <path d="M11 11l9-.5a10 10 0 0 1-8 11z" fill="#fbbc05" />
            <circle cx="11" cy="11" r="4.800" fill="#fff" />
            <circle cx="11" cy="11" r="3.700" fill="#4285f4" />
          </svg>
          <span className="absolute bottom-0 right-0 flex h-[15px] w-[15px] items-center justify-center rounded-full bg-[#b5300c] text-[9px] leading-none text-white">le</span>
        </span>
      </Tile>
      <Tile>
        <span className="flex h-[23px] w-[24px] items-center justify-center rounded-[8px] border-[2px] border-[#0c6fe0] bg-white font-['Noto_Sans',sans-serif] text-[8px] font-bold leading-none text-[#0c6fe0]">Zalo</span>
      </Tile>
      <Tile active>
        <svg width="24" height="23" viewBox="0 0 24 23">
          <rect x="4" y="2" width="19" height="20" fill="#f3f6f1" stroke="#7fae85" />
          <path d="M14 6h8M14 10h8M14 14h8M14 18h8" stroke="#8bbd92" />
          <rect x="0.500" y="1.500" width="15" height="19" fill="#e6f3e2" stroke="#2e8b46" />
          <path d="M3 5l8 12M11 5L3 17" stroke="#1d7a3a" strokeWidth="2.600" />
        </svg>
      </Tile>
      <Tile>
        <svg width="24" height="24" viewBox="0 0 24 24">
          <ellipse cx="10" cy="14" rx="10" ry="8" fill="#dfe9ef" transform="rotate(-15 10 14)" />
          <circle cx="5" cy="12" r="2" fill="#d83c3c" />
          <circle cx="9" cy="8.500" r="2" fill="#3da24c" />
          <circle cx="14" cy="8.500" r="2" fill="#e8a030" />
          <circle cx="5" cy="17" r="2" fill="#3c78c8" />
          <path d="M21 1l2 1-6 11-2 5-1-3 3-6z" fill="#c49358" />
        </svg>
      </Tile>
    </div>
    <div className="flex-1" />
    <div className="flex h-full items-center text-[13.5px] text-[#f2f2f2]">
      <span className="flex w-[33px] justify-center">
        <svg width="23" height="20" viewBox="0 0 23 20">
          <circle cx="15" cy="7" r="5.500" fill="#f4b731" />
          <path d="M5 19c-6 0-6-7 0-7 1-4 8-5 10-1 5-1 7 3 5 5-1 2-2 3-4 3z" fill="#dfe9f3" />
        </svg>
      </span>
      <span className="ml-[4px] w-[30px] whitespace-nowrap">32°C</span>
      <span className="ml-[8px] w-[76px] whitespace-nowrap">Nắng rải rác</span>
      <span className="ml-[5px] flex w-[34px] justify-center">
        <svg width="12" height="7" viewBox="0 0 12 7"><path d="M.5 6.500L6 1l5.500 5.500" fill="none" stroke="#f2f2f2" strokeWidth="1.100" /></svg>
      </span>
      <span className="flex w-[14px] justify-center">
        <svg width="12" height="18" viewBox="0 0 12 18"><path d="M1 3V1h7v2M1 15v2h7v-2M.5 5.500h7v7h-7z" fill="none" stroke="#f2f2f2" /><path d="M8 8l3-2v6l-3-2z" fill="none" stroke="#f2f2f2" /></svg>
      </span>
      <span className="ml-[5px] flex w-[24px] justify-center">
        <span className="flex h-[18px] w-[16px] items-center justify-center border border-[#ddd] bg-[#f7e6e2] font-['Liberation_Sans',sans-serif] text-[14px] font-bold leading-none text-[#c8281e]">V</span>
      </span>
      <span className="flex w-[24px] justify-center">
        <svg width="16" height="16" viewBox="0 0 16 16"><path d="M5 .5h10v10H8M.5 6.500h7v6h-7zM4 12.500v3M1 15.500h6" fill="none" stroke="#f2f2f2" /></svg>
      </span>
      <span className="relative flex w-[22px] justify-center">
        <svg width="12" height="14" viewBox="0 0 12 14"><path d="M.5 5h3l4-4v12l-4-4h-3z" fill="none" stroke="#f2f2f2" /></svg>
        <span className="absolute bottom-[-3px] right-[2px] flex h-[9px] w-[9px] items-center justify-center rounded-full bg-[#e81123] text-[8px] leading-none text-white">×</span>
      </span>
      <span className="w-[38px] text-center text-[12px]">ENG</span>
      <span className="flex w-[70px] flex-col items-center text-[12px] leading-[18px]">
        <span>3:53 PM</span>
        <span>30/06/2022</span>
      </span>
      <span className="relative flex w-[53px] justify-start pl-[10px]">
        <svg width="17" height="17" viewBox="0 0 17 17"><path d="M0 0h17v13H8l-3 4v-4H0z" fill="#f2f2f2" /><path d="M3 4h11M3 7h11M3 10h7" stroke="#1b1b1b" /></svg>
        <span className="absolute left-[17px] top-[6px] flex h-[16px] w-[16px] items-center justify-center rounded-full border border-[#888] bg-[#1b1b1b] text-[11px] leading-none">1</span>
      </span>
    </div>
  </div>
);

export default function App() {
  return (
    <div className={`relative flex h-[900px] w-[1600px] flex-col overflow-hidden bg-white ${UI}`}>
      <div className="flex">
        <div className="w-[511px] shrink-0">
          <TitleRow />
          <TabsRow />
        </div>
        <div className="w-[187px] shrink-0 border-x border-[#c8d3c8] bg-gradient-to-b from-[#7fd07a] via-[#bdecb6] via-40% to-white to-70%">
          <div className="h-[4px] bg-[#55b84f]" />
          <div className="flex h-[21px] items-center justify-center pt-px text-[10.5px] font-bold text-white [text-shadow:0_0_2px_#5e9e5e]">Chart Tools</div>
          <div className="flex">
            <TabText w="w-[62px]">Design</TabText>
            <TabText w="w-[63px]">Layout</TabText>
            <TabText w="w-[62px]">Format</TabText>
          </div>
        </div>
        <WindowButtons />
      </div>
      <Ribbon />
      <FormulaBar />
      <div className="flex h-[658px] pt-[1px]">
        <Sheet />
        <VScroll />
      </div>
      <SheetTabs />
      <StatusBar />
      <Taskbar />
      <RangeMarks />
      <Chart />
      <MiniToolbar />
      <ContextMenu />
    </div>
  );
}
